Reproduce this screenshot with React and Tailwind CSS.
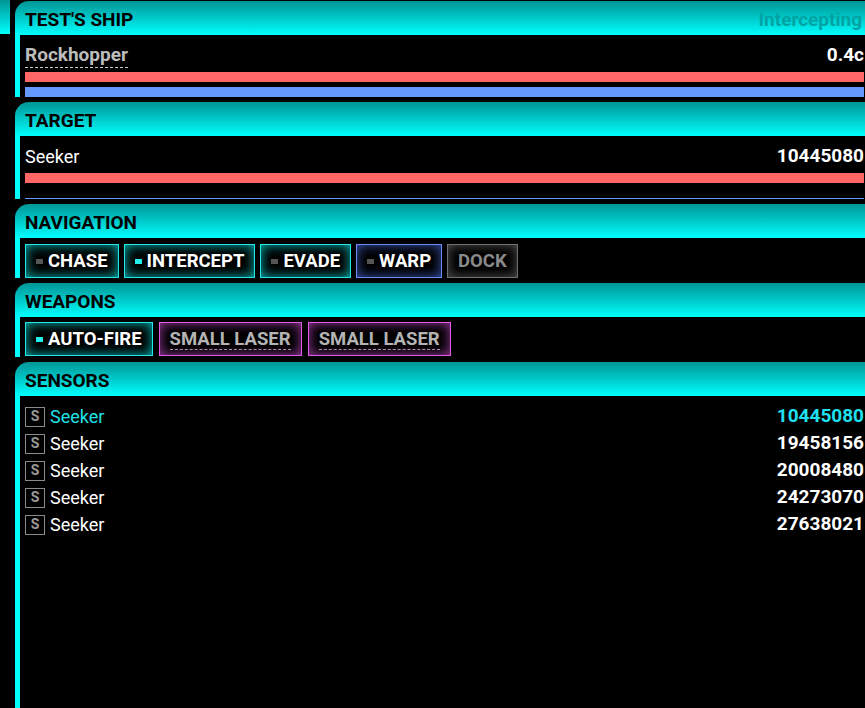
import React from "react";

const headerCls =
  "h-[34px] rounded-tl-[14px] bg-gradient-to-b from-[#009696] to-[#00ffff] pl-[10px] pr-[3px] pt-[2px] flex items-center justify-between";

function Panel({ title, right, children, bodyCls = "" }) {
  return (
    <section className="flex flex-col">
      <div className={headerCls}>
        <h2 className="text-[19px] font-bold text-black leading-none">{title}</h2>
        {right && <span className="text-[19px] font-bold text-[#00a4a4] leading-none">{right}</span>}
      </div>
      <div className={"border-l-[5px] border-[#00ffff] pl-[5px] pr-px " + bodyCls}>{children}</div>
    </section>
  );
}

function Btn({ label, kind = "cyan", active, dot = true, dashed }) {
  const styles = {
    cyan: "border-[#22e8e8] shadow-[inset_0_0_12px_#00b8b8] text-white",
    blue: "border-[#6a8cf5] shadow-[inset_0_0_12px_#3a55b0] text-white",
    gray: "border-[#707070] shadow-[inset_0_0_12px_#555] text-[#8a8a8a]",
    pink: "border-[#e25ae6] shadow-[inset_0_0_12px_#9a3aa0] text-[#b4b4b4]",
  };
  return (
    <button
      className={
        "h-[34px] border flex items-center gap-[5px] bg-black font-bold text-[18.5px] uppercase [text-shadow:0_0_3px_#000] " +
        (dot ? "pl-[10px] pr-[10px] " : "px-[10px] ") +
        styles[kind]
      }
    >
      {dot && <span className={"w-[7px] h-[5px] " + (active ? "bg-[#22eeee]" : "bg-[#555]")} />}
      <span className={dashed ? "border-b border-dashed border-[#9a9a9a] leading-[20px]" : "leading-none"}>{label}</span>
    </button>
  );
}

const sensors = [
  ["Seeker", "10445080", true],
  ["Seeker", "19458156"],
  ["Seeker", "20008480"],
  ["Seeker", "24273070"],
  ["Seeker", "27638021"],
];

export default function App() {
  return (
    <div className="min-h-screen bg-black flex items-start font-['Roboto',sans-serif] overflow-hidden">
      <div className="w-[10px] h-[34px] shrink-0 bg-gradient-to-b from-[#009696] to-[#00ffff]" />
      <div className="ml-[5px] flex-1 flex flex-col gap-[5px] pt-px min-h-screen">
        <Panel title="TEST'S SHIP" right="Intercepting" bodyCls="pt-[8px]">
          <div className="flex items-center justify-between h-[25px]">
            <span className="text-[19px] font-bold text-[#bdbdbd] leading-[24px] border-b border-dashed border-[#cccccc]">
              Rockhopper
            </span>
            <span className="text-[19px] font-bold text-white">0.4c</span>
          </div>
          <div className="mt-[4px] h-[10px] bg-[#ff6666]" />
          <div className="mt-[5px] h-[10px] bg-[#6699ff]" />
        </Panel>

        <Panel title="TARGET" bodyCls="pt-[8px]">
          <div className="flex items-center justify-between h-[24px]">
            <span className="text-[18px] text-white">Seeker</span>
            <span className="text-[19px] font-bold text-white">10445080</span>
          </div>
          <div className="mt-[5px] h-[10px] bg-[#ff6666]" />
          <div className="mt-[15px] h-px bg-[#6699ff]" />
        </Panel>

        <Panel title="NAVIGATION" bodyCls="pt-[6px]">
          <div className="flex gap-[5px]">
            <Btn label="CHASE" />
            <Btn label="INTERCEPT" active />
            <Btn label="EVADE" />
            <Btn label="WARP" kind="blue" />
            <Btn label="DOCK" kind="gray" dot={false} />
          </div>
        </Panel>

        <Panel title="WEAPONS" bodyCls="pt-[5px] pb-px">
          <div className="flex gap-[6px]">
            <Btn label="AUTO-FIRE" active />
            <Btn label="SMALL LASER" kind="pink" dot={false} dashed />
            <Btn label="SMALL LASER" kind="pink" dot={false} dashed />
          </div>
        </Panel>

        <div className="flex-1 flex flex-col">
          <div className={headerCls}>
            <h2 className="text-[19px] font-bold text-black leading-none">SENSORS</h2>
          </div>
          <div className="flex-1 border-l-[5px] border-[#00ffff] pl-[5px] pr-px pt-[7px]">
            {sensors.map(([name, dist, sel], i) => (
              <div key={i} className="h-[27px] flex items-center justify-between">
                <div className="flex items-center gap-[5px]">
                  <span className="w-[20px] h-[20px] border border-[#8a8a8a] flex items-center justify-center text-[14px] font-bold text-[#9a9a9a]">
                    S
                  </span>
                  <span className={"text-[18px] " + (sel ? "text-[#1fe0e6]" : "text-white")}>{name}</span>
                </div>
                <span className={"text-[19px] font-bold " + (sel ? "text-[#1fe0f0]" : "text-white")}>{dist}</span>
              </div>
            ))}
          </div>
        </div>
      </div>
    </div>
  );
}
